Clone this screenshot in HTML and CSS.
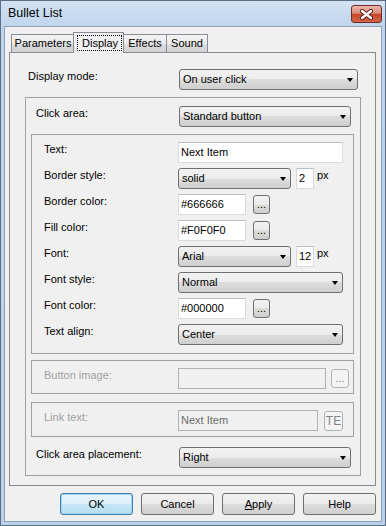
FILE: index.html
```html
<!DOCTYPE html>
<html lang="en">
<head>
    <meta charset="UTF-8">
    <title>Bullet List</title>
    <link rel="stylesheet" href="styles.css">
</head>
<body>
  <div class="window">
    <div class="titlebar">
      <span class="title">Bullet List</span>
      <button class="close" type="button">
        <svg width="13" height="11" viewBox="0 0 13 11">
          <path d="M2 2 L11 9 M11 2 L2 9" stroke="#5a1d14" stroke-width="4.2" stroke-linecap="round"/>
          <path d="M2 2 L11 9 M11 2 L2 9" stroke="#fff" stroke-width="2.4" stroke-linecap="round"/>
        </svg>
      </button>
    </div>

    <div class="client">
      <div class="tabs">
        <div class="tab tab-params">Parameters</div>
        <div class="tab tab-display active"><span class="focus">Display</span></div>
        <div class="tab tab-effects">Effects</div>
        <div class="tab tab-sound">Sound</div>
      </div>

      <div class="panel">
        <div class="row top-row">
          <span class="lbl">Display mode:</span>
          <div class="combo w-display">On user click</div>
        </div>

        <div class="group group-click">
          <div class="row sub-row">
            <span class="lbl">Click area:</span>
            <div class="combo w-click">Standard button</div>
          </div>

          <div class="group group-style">
            <div class="row">
              <span class="lbl">Text:</span>
              <div class="field w-text">Next Item</div>
            </div>
            <div class="row">
              <span class="lbl">Border style:</span>
              <div class="combo w-short">solid</div>
              <div class="field num">2</div>
              <span class="unit">px</span>
            </div>
            <div class="row">
              <span class="lbl">Border color:</span>
              <div class="field w-color">#666666</div>
              <button class="dots" type="button">...</button>
            </div>
            <div class="row">
              <span class="lbl">Fill color:</span>
              <div class="field w-color">#F0F0F0</div>
              <button class="dots" type="button">...</button>
            </div>
            <div class="row">
              <span class="lbl">Font:</span>
              <div class="combo w-short">Arial</div>
              <div class="field num">12</div>
              <span class="unit">px</span>
            </div>
            <div class="row">
              <span class="lbl">Font style:</span>
              <div class="combo w-text">Normal</div>
            </div>
            <div class="row">
              <span class="lbl">Font color:</span>
              <div class="field w-color">#000000</div>
              <button class="dots" type="button">...</button>
            </div>
            <div class="row">
              <span class="lbl">Text align:</span>
              <div class="combo w-text">Center</div>
            </div>
          </div>

          <div class="group group-image disabled">
            <div class="row">
              <span class="lbl">Button image:</span>
              <div class="field w-image"></div>
              <button class="dots dots-image" type="button">...</button>
            </div>
          </div>

          <div class="group group-link disabled">
            <div class="row">
              <span class="lbl">Link text:</span>
              <div class="field w-link">Next Item</div>
              <button class="te" type="button">TE</button>
            </div>
          </div>

          <div class="row sub-row placement-row">
            <span class="lbl">Click area placement:</span>
            <div class="combo w-click">Right</div>
          </div>
        </div>
      </div>

      <div class="buttons">
        <button class="btn btn-default" type="button">OK</button>
        <button class="btn" type="button">Cancel</button>
        <button class="btn" type="button"><u>A</u>pply</button>
        <button class="btn" type="button">Help</button>
      </div>
    </div>
  </div>
</body>
</html>
```

FILE: styles.css
```css
* {
  box-sizing: border-box;
}

body {
  margin: 0;
  font-family: "Liberation Sans", Arial, sans-serif;
  font-size: 11px;
  color: #000;
  background: #fff;
}

button {
  font-family: inherit;
  font-size: 11px;
  color: #000;
  padding: 0;
}

/* window frame */
.window {
  width: 386px;
  height: 526px;
  border: 1px solid #5c6f86;
  background: linear-gradient(#d3e2f3, #bfd4ec 26px, #b9d1ea);
  padding: 0 3px 3px 3px;
  display: flex;
  flex-direction: column;
}

.titlebar {
  height: 25px;
  display: flex;
  align-items: flex-start;
  padding: 4px 0 0 4px;
}

.title {
  flex: 1;
  font-size: 12.5px;
  line-height: 16px;
}

.close {
  width: 31px;
  height: 18px;
  border: 1px solid #6e2c22;
  border-radius: 3px;
  background: linear-gradient(#ebb7ab, #dc8a78 45%, #c9462f 52%, #d2654c);
  display: flex;
  align-items: center;
  justify-content: center;
}

.client {
  flex: 1;
  border: 1px solid #8ca1b9;
  background: #f0f0f0;
  display: flex;
  flex-direction: column;
}

/* tabs */
.tabs {
  display: flex;
  align-items: flex-end;
  height: 20px;
  margin: 5px 0 0 6px;
  position: relative;
  z-index: 1;
}

.tab {
  height: 18px;
  border: 1px solid #898c95;
  border-bottom: 0;
  background: linear-gradient(#f3f3f3, #ebebeb 50%, #dedede 50%, #d2d2d2);
  line-height: 17px;
  text-align: center;
  margin-left: -1px;
}

.tab-params { width: 64px; margin-left: 0; }
.tab-effects { width: 44px; }
.tab-sound { width: 42px; }

.tab.active {
  width: 51px;
  height: 21px;
  margin-left: -2px;
  margin-bottom: -1px;
  background: #f0f0f0;
  padding: 2px 1px 0 3px;
  text-align: left;
}

.focus {
  display: block;
  height: 16px;
  border: 1px dotted #000;
  line-height: 14px;
  padding-left: 4px;
}

/* panel and groups */
.panel {
  margin: 0 5px 0 4px;
  border: 1px solid #898c95;
  background: #f0f0f0;
  padding: 16px 0 0 15px;
}

.group {
  border: 1px solid #a0a0a0;
}

.group-click {
  width: 336px;
  margin: 7px 0 9px 0;
  padding: 8px 0 7px 5px;
}

.group-style {
  width: 323px;
  margin-top: 7px;
  padding: 7px 0 8px 12px;
  display: flex;
  flex-direction: column;
  gap: 5px;
}

.group-image {
  width: 323px;
  margin-top: 6px;
  padding: 7px 0 4px 12px;
}

.group-link {
  width: 323px;
  margin-top: 8px;
  padding: 7px 0 5px 12px;
}

.row {
  display: flex;
  align-items: flex-start;
  height: 21px;
}

.lbl {
  width: 134px;
  line-height: 13px;
  padding-top: 1px;
  flex: none;
}

.top-row {
  padding-left: 3px;
}

.top-row .lbl {
  width: 151px;
}

.sub-row {
  padding-left: 5px;
}

.sub-row .lbl {
  width: 143px;
}

.placement-row {
  margin-top: 10px;
}

/* controls */
.combo {
  position: relative;
  height: 21px;
  border: 1px solid #707070;
  border-radius: 3px;
  background: linear-gradient(#f2f2f2, #ebebeb 50%, #dddddd 50%, #cfcfcf);
  line-height: 19px;
  padding-left: 3px;
  flex: none;
}

.combo::after {
  content: "";
  position: absolute;
  right: 4px;
  top: 8px;
  border-style: solid;
  border-width: 4px 3.5px 0 3.5px;
  border-color: #000 transparent transparent transparent;
}

.field {
  height: 21px;
  border: 1px solid #d6dbe1;
  border-top-color: #b9bdc4;
  background: #fff;
  line-height: 19px;
  padding-left: 2px;
  flex: none;
}

.w-display { width: 179px; }
.w-click { width: 172px; }
.w-text { width: 165px; }
.w-short { width: 113px; }
.w-color { width: 68px; }
.w-image { width: 148px; }
.w-link { width: 140px; }

.num {
  width: 18px;
  margin-left: 5px;
}

.unit {
  margin-left: 3px;
  line-height: 13px;
  padding-top: 1px;
}

.dots {
  width: 17px;
  height: 19px;
  margin: 1px 0 0 7px;
  border: 1px solid #707070;
  border-radius: 3px;
  background: linear-gradient(#f2f2f2, #ebebeb 50%, #dddddd 50%, #cfcfcf);
  line-height: 17px;
  text-align: center;
}

.dots-image {
  width: 18px;
  margin-left: 5px;
}

.te {
  width: 19px;
  height: 20px;
  margin: 1px 0 0 6px;
  border-radius: 3px;
  line-height: 18px;
  text-align: center;
  font-size: 12px;
}

/* disabled groups */
.disabled .lbl {
  color: #a0a0a0;
}

.disabled .field {
  border-color: #adb2b5;
  background: transparent;
  color: #6d6d6d;
}

.disabled .dots,
.disabled .te {
  border: 1px solid #adb2b5;
  background: #f4f4f4;
  color: #838383;
}

/* dialog buttons */
.buttons {
  display: flex;
  justify-content: flex-end;
  gap: 8px;
  margin: 7px 5px 0 0;
}

.btn {
  width: 73px;
  height: 22px;
  border: 1px solid #707070;
  border-radius: 3px;
  background: linear-gradient(#f2f2f2, #ebebeb 50%, #dddddd 50%, #cfcfcf);
  line-height: 20px;
  text-align: center;
}

.btn-default {
  border-color: #3c7fb1;
  background: linear-gradient(#e8f5fc, #dbeffa 50%, #c6e6f7 50%, #b7ddf2);
  box-shadow: inset 0 0 0 1px #9fd6f4;
}
```
